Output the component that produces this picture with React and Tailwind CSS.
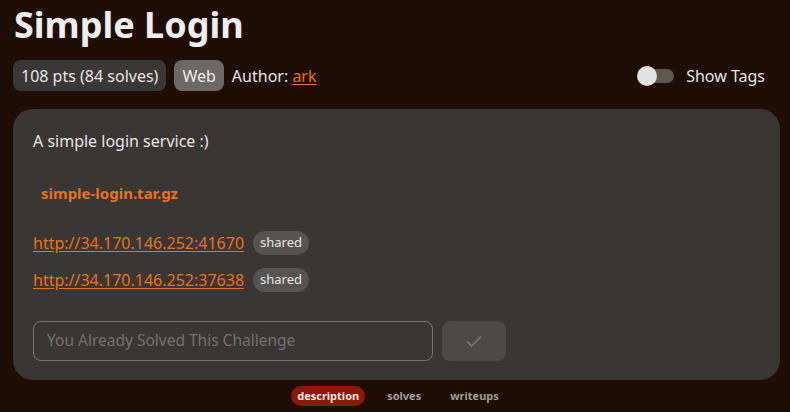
import React from "react";

export default function App() {
  return (
    <div className="min-h-[412px] w-[790px] bg-[#1e0e05] text-[#ececec] overflow-hidden" style={{ fontFamily: '"Noto Sans", "Open Sans", sans-serif' }}>
      <div className="px-[13px] pt-[2px]">
        <h1 className="text-[36px] font-bold leading-[46px] pl-[1px] text-[#eeeeee]">Simple Login</h1>
        <div className="flex items-center mt-[12px] h-[31px]">
          <span className="h-[31px] px-[8px] rounded-[8px] bg-[#3a3836] text-[16px] flex items-center text-[#e6e6e6]">108 pts (84 solves)</span>
          <span className="ml-[8px] h-[31px] px-[8px] rounded-[8px] bg-[#6b6866] text-[16px] flex items-center text-[#eeeeee]">Web</span>
          <span className="ml-[8px] text-[16px] text-[#e6e6e6]">Author: <a className="text-[#e8721f] underline underline-offset-2">ark</a></span>
          <div className="ml-auto flex items-center mr-[12px]">
            <div className="relative w-[37px] h-[20px] flex items-center">
              <div className="absolute left-[11px] w-[26px] h-[14px] rounded-full bg-[#5e5650]" />
              <div className="absolute left-0 w-[20px] h-[20px] rounded-full bg-[#e2e2e2]" />
            </div>
            <span className="ml-[12px] text-[16px] text-[#e6e6e6]">Show Tags</span>
          </div>
        </div>
        <div className="mt-[18px] w-[767px] h-[271px] rounded-[20px] bg-[#393634] px-[20px] pt-[21px]">
          <p className="text-[16px] leading-[22px] text-[#e6e6e6]">A simple login service :)</p>
          <div className="mt-[29px] pl-[8px]">
            <a className="text-[15px] font-bold text-[#e8721f] leading-[22px]">simple-login.tar.gz</a>
          </div>
          <div className="mt-[26px] flex items-center h-[24px]">
            <a className="text-[16px] text-[#e8721f] underline underline-offset-2">http://34.170.146.252:41670</a>
            <span className="ml-[9px] h-[24px] px-[7px] rounded-full bg-[#565452] text-[13px] flex items-center text-[#e6e6e6]">shared</span>
          </div>
          <div className="mt-[13px] flex items-center h-[24px]">
            <a className="text-[16px] text-[#e8721f] underline underline-offset-2">http://34.170.146.252:37638</a>
            <span className="ml-[9px] h-[24px] px-[7px] rounded-full bg-[#565452] text-[13px] flex items-center text-[#e6e6e6]">shared</span>
          </div>
          <div className="mt-[29px] flex items-center">
            <div className="w-[400px] h-[40px] rounded-[8px] border border-[#7a7775] flex items-center px-[13px] text-[15.5px] text-[#747170]">You Already Solved This Challenge</div>
            <div className="ml-[9px] w-[64px] h-[40px] rounded-[8px] bg-[#4c4a48] flex items-center justify-center">
              <svg width="20" height="20" viewBox="0 0 24 24" fill="none" stroke="#7c7977" strokeWidth="2" strokeLinecap="round" strokeLinejoin="round"><path d="M4 13l5 5L20 7" /></svg>
            </div>
          </div>
        </div>
        <div className="flex items-center justify-center mt-[6px] text-[11px] font-bold">
          <span className="h-[20px] px-[6px] rounded-full bg-[#8c180a] flex items-center text-[#f0e6e0]">description</span>
          <span className="ml-[22px] text-[#a39d98]">solves</span>
          <span className="ml-[29px] text-[#a39d98]">writeups</span>
        </div>
      </div>
    </div>
  );
}
